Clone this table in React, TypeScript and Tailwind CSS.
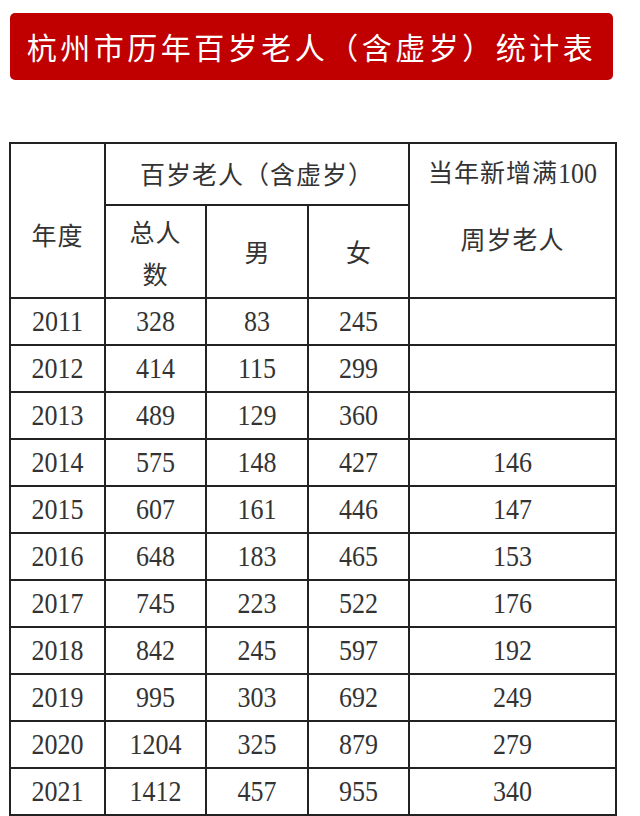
import React from "react";

const rows: [string, string, string, string, string][] = [
  ["2011", "328", "83", "245", ""],
  ["2012", "414", "115", "299", ""],
  ["2013", "489", "129", "360", ""],
  ["2014", "575", "148", "427", "146"],
  ["2015", "607", "161", "446", "147"],
  ["2016", "648", "183", "465", "153"],
  ["2017", "745", "223", "522", "176"],
  ["2018", "842", "245", "597", "192"],
  ["2019", "995", "303", "692", "249"],
  ["2020", "1204", "325", "879", "279"],
  ["2021", "1412", "457", "955", "340"],
];

const cjk = "font-['Noto_Sans_CJK_SC','Noto_Sans',sans-serif]";
const cell = "border-2 border-[#222] text-center align-middle p-0";

export default function App() {
  return (
    <div className="w-[640px] h-[816px] bg-white overflow-hidden">
      <div className="pt-[13px] pl-[10px]">
        <div
          className={`w-[603px] h-[67px] rounded-[5px] bg-[#c00000] flex items-center justify-center text-white text-[30px] tracking-[3.5px] font-normal ${cjk}`}
        >
          杭州市历年百岁老人（含虚岁）统计表
        </div>
      </div>
      <div className="pl-[9px] pt-[62px]">
        <table className="border-collapse table-fixed w-[606px] text-[#333]">
          <colgroup>
            <col className="w-[95px]" />
            <col className="w-[101px]" />
            <col className="w-[102px]" />
            <col className="w-[101px]" />
            <col className="w-[207px]" />
          </colgroup>
          <thead>
            <tr className="h-[62px]">
              <th rowSpan={2} className={`${cell} ${cjk} font-normal text-[25px] tracking-[1px]`}>
                <div className="pt-[28px]">年度</div>
              </th>
              <th colSpan={3} className={`${cell} ${cjk} font-normal text-[25px] tracking-[1px]`}>
                百岁老人（含虚岁）
              </th>
              <th rowSpan={2} className={`${cell} ${cjk} font-normal text-[25px] tracking-[1px] align-top`}>
                <div className="pt-[7px] leading-[40px]">
                  当年新增满
                  <span className="inline-block scale-y-[1.15] font-['Liberation_Serif',serif] text-[26px] tracking-normal">
                    100
                  </span>
                </div>
                <div className="pt-[24px] leading-[40px]">周岁老人</div>
              </th>
            </tr>
            <tr className="h-[93px]">
              <th className={`${cell} ${cjk} font-normal text-[25px] tracking-[1px] leading-[42px]`}>
                总人
                <br />
                数
              </th>
              <th className={`${cell} ${cjk} font-normal text-[25px]`}>男</th>
              <th className={`${cell} ${cjk} font-normal text-[25px]`}>女</th>
            </tr>
          </thead>
          <tbody className="font-['Liberation_Serif',serif] text-[26px]">
            {rows.map((r) => (
              <tr key={r[0]} className="h-[47px]">
                {r.map((v, i) => (
                  <td key={i} className={cell}>
                    <span className="inline-block scale-y-[1.15]">{v}</span>
                  </td>
                ))}
              </tr>
            ))}
          </tbody>
        </table>
      </div>
    </div>
  );
}
